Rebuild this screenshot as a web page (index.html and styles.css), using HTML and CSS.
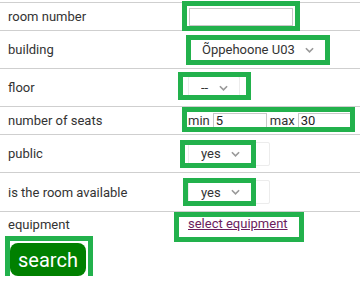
FILE: index.html
```html
<!DOCTYPE html>
<html lang="en">
<head>
<meta charset="utf-8">
<title>Room search</title>
<link rel="stylesheet" href="styles.css">
</head>
<body>
<form class="search-form">
  <div class="row h28">
    <span class="label">room number</span>
    <span class="field">
      <span class="mark mark-room"><input class="text-input room-input" type="text" aria-label="room number"></span>
    </span>
  </div>
  <div class="row h38">
    <span class="label">building</span>
    <span class="field">
      <span class="select sel-building mark mark-building">
        <select class="native" aria-label="building"><option>Õppehoone U03</option></select>
        <svg class="chev" viewBox="0 0 10 6" aria-hidden="true"><path d="M1 1l4 4 4-4"/></svg>
      </span>
    </span>
  </div>
  <div class="row h38">
    <span class="label">floor</span>
    <span class="field">
      <span class="select sel-floor mark mark-floor">
        <select class="native" aria-label="floor"><option>--</option></select>
        <svg class="chev" viewBox="0 0 10 6" aria-hidden="true"><path d="M1 1l4 4 4-4"/></svg>
      </span>
    </span>
  </div>
  <div class="row h28">
    <span class="label">number of seats</span>
    <span class="field">
      <span class="seats mark mark-seats">
        <span class="seat-label">min</span>
        <input class="text-input seat-input" type="text" value="5" aria-label="min seats">
        <span class="seat-label">max</span>
        <input class="text-input seat-input" type="text" value="30" aria-label="max seats">
      </span>
    </span>
  </div>
  <div class="row h38">
    <span class="label">public</span>
    <span class="field">
      <span class="select sel-yes mark mark-public">
        <select class="native" aria-label="public"><option>yes</option></select>
        <svg class="chev" viewBox="0 0 10 6" aria-hidden="true"><path d="M1 1l4 4 4-4"/></svg>
      </span>
    </span>
  </div>
  <div class="row h39">
    <span class="label">is the room available</span>
    <span class="field">
      <span class="select sel-yes mark mark-available">
        <select class="native" aria-label="is the room available"><option>yes</option></select>
        <svg class="chev" viewBox="0 0 10 6" aria-hidden="true"><path d="M1 1l4 4 4-4"/></svg>
      </span>
    </span>
  </div>
  <div class="row h25 row-last">
    <span class="label">equipment</span>
    <span class="field">
      <a class="equip-link mark mark-equip" href="#">select equipment</a>
    </span>
  </div>
  <button class="search-btn mark mark-search" type="button">search</button>
</form>
</body>
</html>
```

FILE: styles.css
```css
html, body {
  margin: 0;
  padding: 0;
  background: #ffffff;
}

body {
  font-family: Roboto, "Noto Sans", "Liberation Sans", Arial, sans-serif;
  font-size: 13px;
  color: #333333;
}

.search-form {
  padding-top: 2px;
}

.row {
  display: grid;
  grid-template-columns: 180px 1fr;
  align-items: center;
  border-top: 1px solid #cfcfcf;
  box-sizing: border-box;
}

.h25 { height: 25px; }
.h28 { height: 28px; }
.h38 { height: 38px; }
.h39 { height: 39px; }

.label {
  padding-left: 8px;
  white-space: nowrap;
}

.field {
  display: flex;
  align-items: center;
  padding-left: 8px;
}

/* green annotation rectangles */
.mark {
  position: relative;
}

.mark::after {
  content: "";
  position: absolute;
  border: 5px solid #22b14c;
  pointer-events: none;
}

.mark-room::after      { top: -7px; right: -7px; bottom: -5px; left: -6px; }
.mark-building::after  { top: -4px; right: -5px; bottom: -4px; left: -3px; }
.mark-floor::after     { top: -5px; right: -12px; bottom: -1px; left: -11px; }
.mark-seats::after     { top: -6px; right: -3px; bottom: -4px; left: -6px; }
.mark-public::after    { top: -3px; right: 13px; bottom: -3px; left: -9px; }
.mark-available::after { top: -3px; right: 13px; bottom: -3px; left: -6px; }
.mark-equip::after     { top: -4px; right: -16px; bottom: -10px; left: -14px; }
.mark-search::after    { top: -7px; right: -7px; bottom: -7px; left: -5px; }

/* text inputs */
.text-input {
  box-sizing: border-box;
  margin: 0;
  border: 1px solid #c8c8c8;
  background: #ffffff;
  font: inherit;
  color: #222222;
  outline: none;
}

.room-input {
  width: 104px;
  height: 18px;
  margin-left: 1px;
  padding: 0 3px;
}

.seats {
  display: inline-flex;
  align-items: center;
  gap: 3px;
}

.seat-label {
  line-height: 15px;
}

.seat-input {
  width: 54px;
  height: 15px;
  padding: 0 2px;
  line-height: 13px;
}

/* custom selects */
.select {
  display: inline-flex;
  align-items: center;
  box-sizing: border-box;
  height: 24px;
  border: 1px solid #ececec;
  border-radius: 2px;
  background: #ffffff;
  padding: 0 11px 0 12px;
  gap: 10px;
}

.sel-building {
  padding-left: 13px;
}

.sel-yes {
  width: 82px;
}

.native {
  -webkit-appearance: none;
  appearance: none;
  border: none;
  background: transparent;
  padding: 0;
  margin: 0;
  font: inherit;
  color: #333333;
  outline: none;
}

.chev {
  width: 9px;
  height: 6px;
  flex: none;
  fill: none;
  stroke: #999999;
  stroke-width: 1.8;
}

/* equipment link */
.equip-link {
  display: inline-block;
  line-height: 16px;
  color: #6b1d5e;
  text-decoration: underline;
}

/* search button */
.search-btn {
  display: block;
  box-sizing: border-box;
  width: 76px;
  height: 33px;
  margin: 7px 0 0 10px;
  padding: 0;
  border: none;
  border-radius: 8px;
  background: #008000;
  color: #ffffff;
  font-family: Roboto, "Noto Sans", "Liberation Sans", Arial, sans-serif;
  font-size: 20px;
  font-weight: 400;
  cursor: pointer;
}
```
